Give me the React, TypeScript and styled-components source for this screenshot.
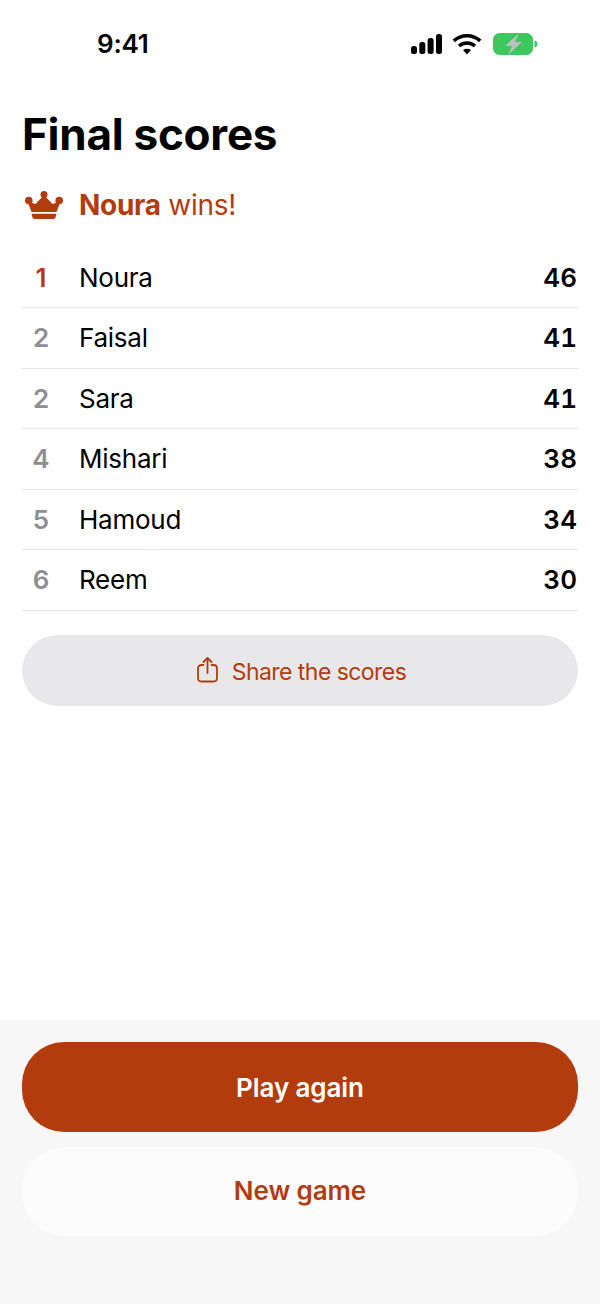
import React from "react";
import styled, { createGlobalStyle } from "styled-components";

const Global = createGlobalStyle`
  html, body { margin: 0; padding: 0; background: #fff; }
  body { font-family: Inter, "Liberation Sans", sans-serif; }
`;

const ACCENT = "#b23c0e";

const Screen = styled.div`
  width: 600px;
  height: 1304px;
  display: flex;
  flex-direction: column;
  background: #fff;
  overflow: hidden;
`;

const StatusBar = styled.div`
  height: 87px;
  padding: 0 62px 0 97px;
  display: flex;
  align-items: center;
  justify-content: space-between;
  flex-shrink: 0;
`;

const Time = styled.div`
  font-size: 26px;
  font-weight: 600;
  letter-spacing: -0.2px;
  color: #000;
`;

const StatusIcons = styled.div`
  display: flex;
  align-items: center;
  gap: 10px;
`;

const Content = styled.main`
  flex: 1;
  padding: 0 22px;
  display: flex;
  flex-direction: column;
`;

const Title = styled.h1`
  margin: 18px 0 0;
  font-size: 44px;
  line-height: 58px;
  font-weight: 700;
  letter-spacing: -0.25px;
  color: #000;
`;

const Winner = styled.div`
  margin-top: 22px;
  height: 40px;
  display: flex;
  align-items: center;
  gap: 16px;
  padding-left: 3px;
  font-size: 28px;
  color: ${ACCENT};
`;

const WinnerText = styled.div`
  font-weight: 400;
  letter-spacing: -0.3px;
  b { font-weight: 700; }
`;

const List = styled.div`
  margin-top: 22.6px;
  display: flex;
  flex-direction: column;
`;

const Row = styled.div`
  height: 60.5px;
  box-sizing: border-box;
  display: flex;
  align-items: center;
  border-bottom: 1px solid #e5e5e7;
`;

const Rank = styled.span<{ $first: boolean }>`
  width: 38px;
  text-align: center;
  margin-right: 20px;
  font-size: 26px;
  font-weight: 600;
  color: ${(p) => (p.$first ? ACCENT : "#8e8e93")};
`;

const Name = styled.span`
  flex: 1;
  margin-left: -1px;
  font-size: 26px;
  font-weight: 400;
  letter-spacing: -0.25px;
  color: #000;
`;

const Score = styled.span`
  margin-right: 1px;
  font-size: 26px;
  font-weight: 600;
  font-variant-numeric: tabular-nums;
  color: #000;
`;

const ShareButton = styled.button`
  margin-top: 24.4px;
  height: 71px;
  width: 100%;
  padding: 0 0 0 3px;
  border: none;
  border-radius: 36px;
  background: #e8e8ea;
  color: ${ACCENT};
  display: flex;
  align-items: center;
  justify-content: center;
  gap: 14px;
  font-family: inherit;
  font-size: 23px;
  font-weight: 400;
  letter-spacing: -0.55px;
`;

const ShareLabel = styled.span`
  padding-top: 4px;
`;

const Footer = styled.footer`
  height: 284px;
  flex-shrink: 0;
  box-sizing: border-box;
  padding: 22px 22px 0;
  background: #f7f7f7;
  display: flex;
  flex-direction: column;
  gap: 15px;
`;

const FooterButton = styled.button<{ $primary?: boolean }>`
  height: ${(p) => (p.$primary ? 90 : 89)}px;
  padding: 0 0 ${(p) => (p.$primary ? 0 : 2)}px;
  border: none;
  border-radius: 42px;
  background: ${(p) => (p.$primary ? ACCENT : "#fcfcfc")};
  color: ${(p) => (p.$primary ? "#fff" : ACCENT)};
  font-family: inherit;
  font-size: 26px;
  font-weight: 600;
  letter-spacing: -0.1px;
`;

const players = [
  { rank: 1, name: "Noura", score: 46 },
  { rank: 2, name: "Faisal", score: 41 },
  { rank: 2, name: "Sara", score: 41 },
  { rank: 4, name: "Mishari", score: 38 },
  { rank: 5, name: "Hamoud", score: 34 },
  { rank: 6, name: "Reem", score: 30 },
];

const Signal = () => (
  <svg width="31" height="20" viewBox="0 0 31 20" fill="#000">
    <rect x="0" y="12" width="6" height="8" rx="2.5" />
    <rect x="8.300" y="8" width="6" height="12" rx="2.5" />
    <rect x="16.600" y="4" width="6" height="16" rx="2.5" />
    <rect x="25" y="0" width="6" height="20" rx="2.5" />
  </svg>
);

const Wifi = () => (
  <svg width="30" height="22" viewBox="0 0 30 22" fill="none" stroke="#000" strokeWidth="3.600">
    <path d="M1.800 7.800C9.300 1 20.700 1 28.200 7.800" />
    <path d="M7 13c4.600-4 11.400-4 16 0" />
    <path d="M15 21.500l-4-4.400c2.300-1.700 5.700-1.700 8 0z" fill="#000" stroke="none" />
  </svg>
);

const Battery = () => (
  <svg width="45" height="22" viewBox="0 0 45 22" style={{ marginLeft: 1 }}>
    <rect x="0" y="0" width="40" height="22" rx="6.500" fill="#3dc75c" />
    <path d="M41.500 7.500c2 .4 3 1.700 3 3.500s-1 3.100-3 3.500z" fill="#3dc75c" />
    <path d="M26 0 12 13h7l-4 9L29 9h-7z" fill="#bcc0bc" />
  </svg>
);

const Crown = () => (
  <svg width="38" height="28" viewBox="0 0 38 28" fill={ACCENT}>
    <circle cx="19" cy="3.500" r="3.500" />
    <circle cx="3.800" cy="9.500" r="3.800" />
    <circle cx="34.200" cy="9.500" r="3.800" />
    <path d="M6.500 21 2.500 10.500l8 2.500L19 4l8.500 9 8-2.500-4 10.500z" />
    <path d="M6.500 22.800h25l-.8 3c-.3 1.400-1.200 2.200-2.600 2.200H9.900c-1.400 0-2.300-.8-2.600-2.200z" />
  </svg>
);

const ShareIcon = () => (
  <svg width="21" height="26" viewBox="0 0 21 26" fill="none" stroke={ACCENT} strokeWidth="1.800" strokeLinecap="round" strokeLinejoin="round">
    <path d="M6.500 8H4.500C2.500 8 1 9.500 1 11.500v9.500c0 2 1.500 3.500 3.500 3.500h12c2 0 3.500-1.500 3.500-3.500v-9.500C20 9.500 18.500 8 16.500 8h-2" />
    <path d="M10.500 16V1.500" />
    <path d="M6.500 5l4-4 4 4" />
  </svg>
);

export default function App() {
  return (
    <Screen>
      <Global />
      <StatusBar>
        <Time>9:41</Time>
        <StatusIcons>
          <Signal />
          <Wifi />
          <Battery />
        </StatusIcons>
      </StatusBar>
      <Content>
        <Title>Final scores</Title>
        <Winner>
          <Crown />
          <WinnerText>
            <b>Noura</b> wins!
          </WinnerText>
        </Winner>
        <List>
          {players.map((p) => (
            <Row key={p.name}>
              <Rank $first={p.rank === 1}>{p.rank}</Rank>
              <Name>{p.name}</Name>
              <Score>{p.score}</Score>
            </Row>
          ))}
        </List>
        <ShareButton>
          <ShareIcon />
          <ShareLabel>Share the scores</ShareLabel>
        </ShareButton>
      </Content>
      <Footer>
        <FooterButton $primary>Play again</FooterButton>
        <FooterButton>New game</FooterButton>
      </Footer>
    </Screen>
  );
}
